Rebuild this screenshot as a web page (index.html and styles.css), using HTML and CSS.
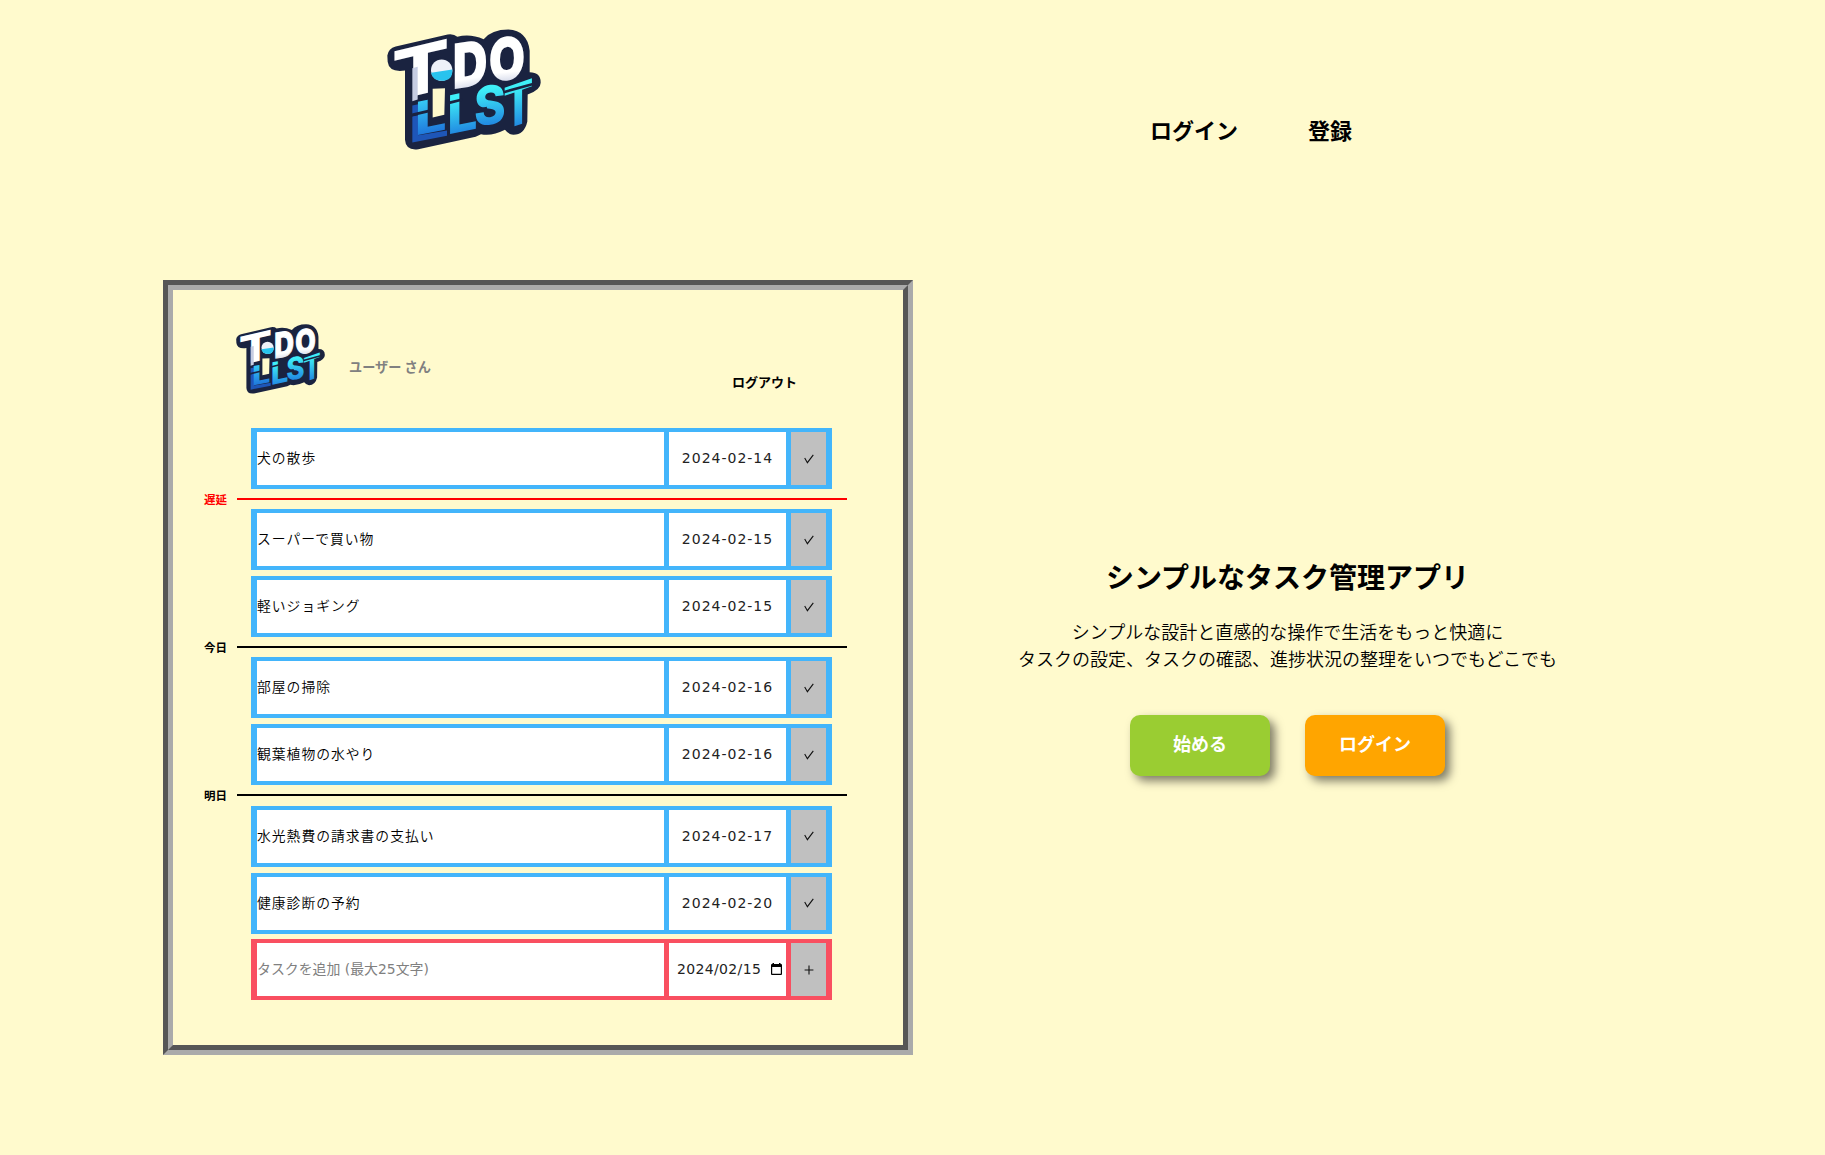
FILE: index.html
```html
<!DOCTYPE html>
<html lang="ja">
<head>
<meta charset="utf-8">
<title>Todo List</title>
<link rel="stylesheet" href="styles.css">
</head>
<body>
<svg class="defs" width="0" height="0" aria-hidden="true">
  <defs>
    <linearGradient id="blue" x1="0" y1="0" x2="0" y2="1"><stop offset="0.25" stop-color="#3ff0f8"/><stop offset="0.85" stop-color="#1f82e0"/></linearGradient>
    <linearGradient id="deep" x1="0" y1="0" x2="0" y2="1"><stop offset="0.2" stop-color="#35c8f4"/><stop offset="0.8" stop-color="#1f78dc"/></linearGradient>
    <linearGradient id="white" x1="0" y1="0" x2="0" y2="1"><stop offset="0.7" stop-color="#fff"/><stop offset="0.85" stop-color="#d5daea"/></linearGradient>
    <symbol id="logo" viewBox="36 43 462 362">
      <path fill="#1a2340" fill-rule="evenodd" d="M62 95 L218 59 Q236 56 247 66 Q285 56 326 73 Q350 44 400 44 Q458 48 464 108 L464 172 Q498 172 497 204 Q497 226 458 239 L457 320 Q448 360 415 360 Q400 359 390 345 Q350 365 318 358 L302 366 L130 403 Q92 408 90 375 L90 167 Q42 174 38 141 L37 122 Q40 101 62 95Z M173 222 L173 308 L208 300 L210 220Z"/>
      <path fill="#1e56b8" d="M112 272l18-4v26l-18 4zM112 305l18-4v60l86-14v16l-104 20z"/>
      <g class="logo-letters">
        <text transform="matrix(1.86 -.44 0 1.48 50 259)" fill="#fff">T</text>
        <text transform="matrix(1.03 -.16 0 1.3 234 220)" stroke="url(#white)" stroke-width="5" fill="url(#white)">D</text>
        <text transform="matrix(1 -.09 0 1.24 343 198)" stroke="url(#white)" stroke-width="5" fill="url(#white)">O</text>
        <text transform="matrix(1.23 -.25 0 1.0 119 363)" fill="url(#deep)">L</text>
        <text transform="matrix(1.18 -.24 0 1.16 216 359)" fill="url(#blue)">L</text>
        <text transform="matrix(1.05 -.14 0 1.17 297 335)" fill="url(#blue)">S</text>
        <text transform="matrix(.97 -.34 0 1.26 385 346)" fill="url(#blue)">T</text>
      </g>
      <path fill="#c5cce2" d="M112 160l16-4v98l-16 5z"/>
      <path stroke="#1a2340" stroke-width="8" d="M108 301l55-13M222 264l40-10M296 288l40-8M386 232l94-26"/>
      <circle cx="200" cy="166" r="38" fill="#1a2340"/>
      <circle cx="200" cy="166" r="32" fill="#eef1f8"/>
      <path fill="#28c3ee" d="M168 174l64-10q2 34-32 34-27 0-32-24z"/>
    </symbol>
  </defs>
</svg>
<header class="site-header">
  <svg class="site-logo" role="img" aria-label="Todo List"><use href="#logo"/></svg>
  <nav class="site-nav"><a>ログイン</a><a>登録</a></nav>
</header>
<main class="main">
  <section class="frame">
    <div class="app-header">
      <svg class="app-logo" aria-hidden="true"><use href="#logo"/></svg>
      <span class="user">ユーザー さん</span>
      <a class="logout">ログアウト</a>
    </div>
    <div class="tasks">
      <div class="row"><div class="name">犬の散歩</div><div class="date">2024-02-14</div><div class="act"><svg class="check" viewBox="0 0 10 10"><path d="M.7 4 3.4 8.7 9.3.8"/></svg></div></div>
      <div class="sep late"><b>遅延</b><i></i></div>
      <div class="row"><div class="name">スーパーで買い物</div><div class="date">2024-02-15</div><div class="act"><svg class="check" viewBox="0 0 10 10"><path d="M.7 4 3.4 8.7 9.3.8"/></svg></div></div>
      <div class="row next"><div class="name">軽いジョギング</div><div class="date">2024-02-15</div><div class="act"><svg class="check" viewBox="0 0 10 10"><path d="M.7 4 3.4 8.7 9.3.8"/></svg></div></div>
      <div class="sep"><b>今日</b><i></i></div>
      <div class="row"><div class="name">部屋の掃除</div><div class="date">2024-02-16</div><div class="act"><svg class="check" viewBox="0 0 10 10"><path d="M.7 4 3.4 8.7 9.3.8"/></svg></div></div>
      <div class="row next"><div class="name">観葉植物の水やり</div><div class="date">2024-02-16</div><div class="act"><svg class="check" viewBox="0 0 10 10"><path d="M.7 4 3.4 8.7 9.3.8"/></svg></div></div>
      <div class="sep"><b>明日</b><i></i></div>
      <div class="row"><div class="name">水光熱費の請求書の支払い</div><div class="date">2024-02-17</div><div class="act"><svg class="check" viewBox="0 0 10 10"><path d="M.7 4 3.4 8.7 9.3.8"/></svg></div></div>
      <div class="row next"><div class="name">健康診断の予約</div><div class="date">2024-02-20</div><div class="act"><svg class="check" viewBox="0 0 10 10"><path d="M.7 4 3.4 8.7 9.3.8"/></svg></div></div>
      <div class="row next add"><div class="name">タスクを追加 (最大25文字)</div><div class="date"><span>2024/02/15</span><svg class="cal" viewBox="0 0 11 12"><path fill-rule="evenodd" d="M1.5 0h1.5v1h5V0h1.5v1h.5q1 0 1 1v9q0 1-1 1H1q-1 0-1-1V2q0-1 1-1h.5zM1.2 4v6.8h8.6V4z"/></svg></div><div class="act"><svg class="check" viewBox="0 0 10 10"><path d="M5 .6v8.8M.6 5h8.8"/></svg></div></div>
    </div>
  </section>
  <section class="intro">
    <h1>シンプルなタスク管理アプリ</h1>
    <p>シンプルな設計と直感的な操作で生活をもっと快適に<br>タスクの設定、タスクの確認、進捗状況の整理をいつでもどこでも</p>
    <div class="buttons"><a class="btn start">始める</a><a class="btn login">ログイン</a></div>
  </section>
</main>
</body>
</html>
```
FILE: styles.css
```css
* { box-sizing: border-box; }
body {
  margin: 0;
  height: 1155px;
  overflow: hidden;
  background: #fffacd;
  color: #000;
  font-family: "Noto Sans CJK JP", sans-serif;
}
.defs { display: block; }
.logo-letters { font: 800 137.5px Inter, sans-serif; }
.site-header {
  display: flex;
  height: 280px;
  padding: 29px 0 0 387px;
}
.site-logo { width: 154px; height: 121px; }
.site-nav {
  display: flex;
  gap: 70px;
  margin: 84px 0 0 609px;
  font-size: 22px;
  font-weight: 600;
  line-height: 32px;
}
.main { display: flex; padding-left: 163px; }
.frame {
  width: 750px;
  height: 775px;
  border: 10px groove #aaa;
}
.app-header { display: flex; height: 138px; padding: 34px 0 0 63px; }
.app-logo { width: 89px; height: 70px; }
.user { width: 383px; margin: 33px 0 0 24px; font-size: 13.2px; line-height: 20px; font-weight: 600; color: #808080; }
.logout { margin-top: 48px; font-size: 13px; line-height: 20px; font-weight: 600; }
.tasks { padding: 0 56px 0 31px; }
.row {
  display: flex;
  gap: 5px;
  width: 581px;
  height: 61px;
  margin-left: 47px;
  padding: 4px 6px 4px;
  background: #43b5fb;
  font-size: 13.8px;
  font-weight: 350;
  letter-spacing: 1px;
}
.next { margin-top: 5.9px; }
.add { background: #f94f60; }
.row > div { display: flex; align-items: center; }
.row > .name { width: 407px; padding-bottom: 3px; background: #fff; }
.row > .date { justify-content: center; width: 117px; padding-bottom: 1px; background: #fff; font-family: "DejaVu Sans", sans-serif; font-size: 14px; font-weight: 400; color: #222; }
.act { justify-content: center; flex: 1; background: #c0c0c0; }
.add .name { color: #808080; font-family: "DejaVu Sans", "Noto Sans CJK JP", sans-serif; font-size: 13.9px; font-weight: 400; letter-spacing: 0; }
.add > .date { justify-content: flex-start; padding-left: 8px; gap: 10px; letter-spacing: .35px; }
.cal { width: 11px; height: 12px; }
.check { width: 10px; height: 10px; fill: none; stroke: #111; stroke-width: 1.1; }
.sep { display: flex; align-items: center; gap: 9px; height: 20.3px; padding-bottom: 1px; font-size: 11.5px; line-height: 18px; }
.sep b { width: 24px; font-weight: 700; white-space: nowrap; }
.sep i { flex: 1; height: 2px; background: #000; }
.late { color: #f00; }
.late i { background: #f00; }
.intro { width: 749px; padding-top: 272px; text-align: center; }
h1 { margin: 0; font-size: 28px; line-height: 48px; font-weight: 600; }
.intro p { margin: 18px 0 0; font-size: 18px; line-height: 27px; font-weight: 350; }
.buttons { display: flex; justify-content: center; gap: 35px; margin-top: 43px; }
.btn {
  width: 140px;
  height: 61px;
  border-radius: 10px;
  box-shadow: 5px 5px 10px rgba(0, 0, 0, .5);
  color: #fff;
  font-size: 18px;
  line-height: 56px;
  font-weight: 700;
}
.start { background: #9acd32; }
.login { background: #ffa500; }
```
